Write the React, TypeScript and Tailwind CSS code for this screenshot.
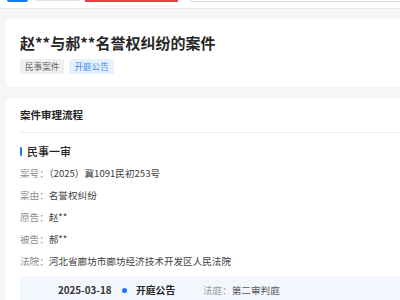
import React from "react";

const cn = '"Noto Sans CJK SC", "Noto Sans", sans-serif';

const rows = [
  { label: "案号：", value: "（2025）冀1091民初253号" },
  { label: "案由：", value: "名誉权纠纷" },
  { label: "原告：", value: "赵**" },
  { label: "被告：", value: "郝**" },
  { label: "法院：", value: "河北省廊坊市廊坊经济技术开发区人民法院" },
];

const App = () => {
  return (
    <main
      className="h-[300px] w-[400px] overflow-hidden bg-[#f5f6f8]"
      style={{ fontFamily: cn }}
    >
      {/* Top header, mostly scrolled out */}
      <div className="h-[9px] border-b border-[#e6e6e6] bg-white">
        <div className="flex items-start">
          <div className="ml-[7px] h-[2px] w-[21px] rounded-b-[2px] bg-[#1677ff]" />
          <div className="ml-[7px] h-[1px] w-[45px] bg-[#e2e2e2]" />
          <div className="ml-[5px] h-[1.5px] w-[93px] bg-[#ee3b3b]" />
          <div className="ml-[12px] h-[2px] flex-1 rounded-bl-[3px] border-b border-l border-[#dcdcdc]" />
        </div>
      </div>

      <div className="pl-[6px] pt-[10px]">
        {/* Case header card */}
        <div className="rounded-l-[4px] bg-white pb-[13px] pl-[14px] pt-[13px]">
          <h1 className="text-[15px] font-bold leading-[22px] text-[#262626]">
            赵**与郝**名誉权纠纷的案件
          </h1>
          <div className="mt-[5px] flex gap-[5px]">
            <span className="rounded-[2px] bg-[#f0f0f0] px-[5px] text-[8.6px] leading-[15px] text-[#666]">
              民事案件
            </span>
            <span className="rounded-[2px] bg-[#e6f1fe] px-[5px] text-[8.6px] leading-[15px] text-[#3b8cf0]">
              开庭公告
            </span>
          </div>
        </div>

        {/* Process card */}
        <div className="mt-[11px] rounded-l-[4px] bg-white pl-[14px] pt-[9px]">
          <h2 className="text-[10.5px] font-bold leading-[16px] text-[#262626]">
            案件审理流程
          </h2>
          <div className="mt-[9px] h-px bg-[#eeeeee]" />

          <div className="mt-[11px] flex items-center">
            <span className="h-[9px] w-[2px] rounded-full bg-[#1677ff]" />
            <span className="ml-[5px] text-[11px] font-medium leading-[14px] text-[#262626]">
              民事一审
            </span>
          </div>

          <div className="mt-[4px]">
            {rows.map((row) => (
              <div key={row.label} className="text-[9.6px] leading-[22px]">
                <span className="text-[#8c8c8c]">{row.label}</span>
                <span className="text-[#404040]">{row.value}</span>
              </div>
            ))}
          </div>

          <div className="mt-[4px] flex items-center bg-[#f3f7fd] pb-[8px] pl-[38px] pt-[8px] leading-[12px]">
            <span className="w-[56px] text-[9.8px] font-bold text-[#333]">2025-03-18</span>
            <span className="ml-[8px] h-[5px] w-[5px] rounded-full bg-[#1677ff]" />
            <span className="ml-[9px] w-[67px] text-[9.8px] font-bold text-[#262626]">开庭公告</span>
            <span className="text-[9.6px] text-[#999]">
              法庭：<span className="text-[#595959]">第二审判庭</span>
            </span>
          </div>
        </div>
      </div>
    </main>
  );
};

export default App;
